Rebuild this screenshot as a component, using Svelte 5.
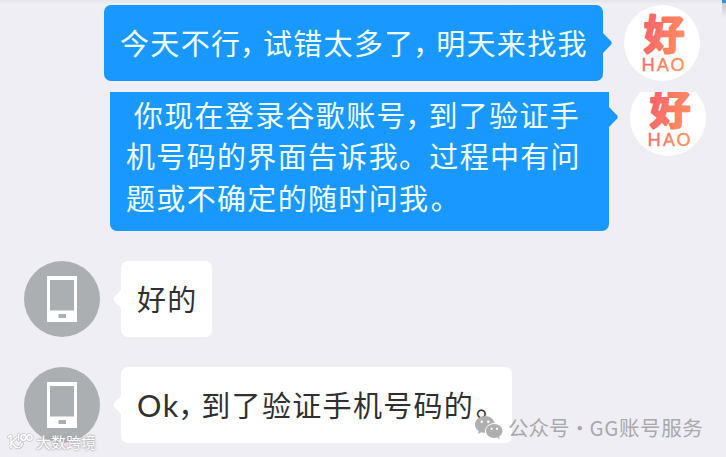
<script lang="ts">
    interface Message {
        id: number;
        from: 'me' | 'phone';
        text: string;
        cut?: boolean;
    }

    const messages: Message[] = [
        { id: 1, from: 'me', text: '今天不行，试错太多了，明天来找我' },
        {
            id: 2,
            from: 'me',
            text: ' 你现在登录谷歌账号，到了验证手\n机号码的界面告诉我。过程中有问\n题或不确定的随时问我。',
            cut: true
        },
        { id: 3, from: 'phone', text: '好的' },
        { id: 4, from: 'phone', text: 'Ok，到了验证手机号码的。' }
    ];

    // commas, a closing full stop and latin words are spaced on their own
    function split(text: string) {
        return text.split(/(，|。$|[A-Za-z]+)/).filter((part) => part !== '');
    }
</script>

{#snippet haoAvatar(id: number)}
    <svg class="avatar" viewBox="0 0 76 76" role="img" aria-label="HAO">
        <defs>
            <linearGradient id="hao-{id}" gradientUnits="userSpaceOnUse" x1="18" y1="30" x2="62" y2="42">
                <stop offset="0" stop-color="#f9636c" />
                <stop offset="1" stop-color="#ff935c" />
            </linearGradient>
        </defs>
        <circle cx="38" cy="38" r="38" fill="#fff" />
        <text class="hao-glyph" x="40.3" y="43.5" fill="url(#hao-{id})" stroke="url(#hao-{id})">好</text>
        <text class="hao-latin" x="17.5" y="65.5" textLength="43" fill="url(#hao-{id})" stroke="url(#hao-{id})">HAO</text>
    </svg>
{/snippet}

{#snippet phoneAvatar()}
    <svg class="avatar" viewBox="0 0 76 76" aria-hidden="true">
        <circle cx="38" cy="38" r="38" fill="#abafb1" />
        <path fill="#fff" fill-rule="evenodd" d="M23 15h30v46H23zM26 19v30.5h24V19zM34.5 53v4H42v-4z" />
    </svg>
{/snippet}

<main class="chat">
    <div class="top-shade"></div>
    <div class="corner"></div>

    {#each messages as message (message.id)}
        <div class="row {message.from}" class:cut={message.cut}>
            {#if message.from === 'phone'}
                {@render phoneAvatar()}
            {/if}
            <div class="bubble">
                <svg class="tail" viewBox="0 0 9 20" aria-hidden="true">
                    <path d="M0 0L7.8 8Q9.6 10 7.8 12L0 20z" />
                </svg>
                <p>{#each split(message.text) as part}<span
                            class:comma={part === '，'}
                            class:stop={part === '。'}
                            class:latin={/^[A-Za-z]/.test(part)}>{part}</span
                        >{/each}</p>
            </div>
            {#if message.from === 'me'}
                {@render haoAvatar(message.id)}
            {/if}
        </div>
    {/each}

    <div class="account">
        <svg width="28" height="23" viewBox="0 0 28 23" aria-hidden="true">
            <path
                fill="#afafb0"
                fill-rule="evenodd"
                d="M10 0C4.400 0 0 3.800 0 8.500c0 2.700 1.400 5 3.700 6.500L3 18l3.300-1.700c1.200.4 2.500.5 3.800.5C9.300 11.500 13.500 7 19.700 6.900 18.700 2.900 14.800 0 10 0zM6.700 4.500a1.300 1.300 0 1 1 0 2.600 1.300 1.300 0 0 1 0-2.600zm6.600 0a1.300 1.300 0 1 1 0 2.600 1.300 1.300 0 0 1 0-2.600z"
            />
            <path
                fill="#afafb0"
                fill-rule="evenodd"
                d="M19.300 8c-4.700 0-8.300 3.100-8.300 7s3.600 7 8.300 7c1 0 2-.2 2.900-.4l2.700 1.300-.7-2.400c2-1.300 3.300-3.200 3.300-5.500 0-3.900-3.600-7-8.200-7zm-2.700 3.700a1.100 1.100 0 1 1 0 2.200 1.100 1.100 0 0 1 0-2.200zm5.400 0a1.100 1.100 0 1 1 0 2.200 1.100 1.100 0 0 1 0-2.200z"
            />
        </svg>
        <span>公众号</span>
        <span class="dot">·</span>
        <span class="name">GG账号服务</span>
    </div>

    <div class="stamp">
        <svg width="27" height="18" viewBox="0 0 27 18" aria-hidden="true">
            <g class="stamp-halo">
                <path d="M1.500 4L4 2.500V15M10 4L4.500 9.500l4 4.500q5 2.500 7-3.500" />
                <path d="M11.500 1.500V7" />
                <circle cx="16.500" cy="4.500" r="2.700" />
                <circle cx="22.500" cy="4.500" r="2.700" />
            </g>
            <g class="stamp-line">
                <path d="M1.500 4L4 2.500V15M10 4L4.500 9.500l4 4.500q5 2.500 7-3.500" />
                <path d="M11.500 1.500V7" />
                <circle cx="16.500" cy="4.500" r="2.700" />
                <circle cx="22.500" cy="4.500" r="2.700" />
            </g>
        </svg>
        <span>大数跨境</span>
    </div>
</main>

<style>
    :global(body) {
        background: #efeef4;
    }

    .chat {
        position: relative;
        box-sizing: border-box;
        width: 726px;
        height: 457px;
        padding-top: 5px;
        overflow: hidden;
        background: #efeef4;
        font-family: "Noto Sans CJK SC", "Noto Sans", sans-serif;
    }

    .top-shade {
        position: absolute;
        inset: 0 0 auto;
        height: 4px;
        background: linear-gradient(#e5e4e9, #efeef4);
    }

    .corner {
        position: absolute;
        top: 0;
        right: 0;
        width: 4px;
        height: 18px;
        background: linear-gradient(#1998ff 3px, #c9c8cc 3px, #efeef4);
    }

    .row {
        display: flex;
        align-items: flex-start;
    }

    .row.me {
        justify-content: flex-end;
        gap: 21px;
        height: 76px;
        padding-right: 26px;
    }

    .row.me.cut {
        align-items: flex-end;
        height: 139px;
        margin-top: 11px;
        padding-right: 20px;
        overflow: hidden;
    }

    .row.cut .avatar {
        margin-bottom: 75px;
    }

    .row.phone {
        gap: 21px;
        margin-top: 30px;
        padding-left: 24px;
    }

    .avatar {
        display: block;
        flex: none;
        width: 76px;
        height: 76px;
    }

    .hao-glyph {
        font-size: 40px;
        font-weight: 500;
        text-anchor: middle;
        stroke-width: 3.2px;
        stroke-linejoin: round;
    }

    .hao-latin {
        font-family: Lato, sans-serif;
        font-size: 17.5px;
        font-weight: 400;
        stroke-width: 0.4px;
    }

    .bubble {
        position: relative;
        box-sizing: border-box;
        min-height: 76px;
        padding: 17px 16px;
        border-radius: 7px;
        background: #fff;
        color: #303030;
    }

    .me .bubble {
        width: 499px;
        background: #1998ff;
        color: #f0ffff;
    }

    .cut .bubble {
        height: 139px;
        padding-top: 1.5px;
        border-radius: 0 0 7px 7px;
    }

    .bubble p {
        margin: 0;
        font-size: 29px;
        letter-spacing: 1.33px;
        line-height: 41.7px;
        white-space: pre;
    }

    .phone .bubble p {
        margin-right: -1.6px;
    }

    .comma {
        margin: 0 1.5px 0 -1.5px;
        letter-spacing: -7.4px;
    }

    .stop {
        margin-left: 1.5px;
        letter-spacing: -7.2px;
    }

    .latin {
        font-family: Lato, sans-serif;
        font-size: 30.5px;
        line-height: 1;
        letter-spacing: 1.5px;
    }

    .tail {
        position: absolute;
        top: 28px;
        left: 100%;
        width: 9px;
        height: 20px;
        margin-left: -0.5px;
        fill: #1998ff;
    }

    .cut .tail {
        top: 15px;
    }

    .phone .tail {
        right: 100%;
        left: auto;
        margin: 0 -0.5px 0 0;
        transform: scaleX(-1);
        fill: #fff;
    }

    .account {
        position: absolute;
        top: 412px;
        left: 475px;
        display: flex;
        align-items: center;
        height: 30px;
        color: #a9a8ad;
        font-size: 20.5px;
        line-height: 30px;
        white-space: pre;
    }

    .account svg {
        margin-right: 5px;
    }

    .dot {
        width: 20px;
        text-align: center;
    }

    .name {
        letter-spacing: 0.6px;
    }

    .stamp {
        position: absolute;
        top: 432px;
        left: 7px;
        display: flex;
        gap: 2px;
        height: 20px;
        color: #fff;
        font-size: 15px;
        font-weight: 400;
        line-height: 20px;
        text-shadow: 0 0 2px #999, 0 0 2px #aaa;
    }

    .stamp svg {
        margin-top: 1px;
    }

    .stamp g {
        fill: none;
        stroke-linecap: round;
        stroke-linejoin: round;
    }

    .stamp-halo {
        stroke: #c2c2c6;
        stroke-width: 3px;
    }

    .stamp-line {
        stroke: #fff;
        stroke-width: 1.5px;
    }
</style>
